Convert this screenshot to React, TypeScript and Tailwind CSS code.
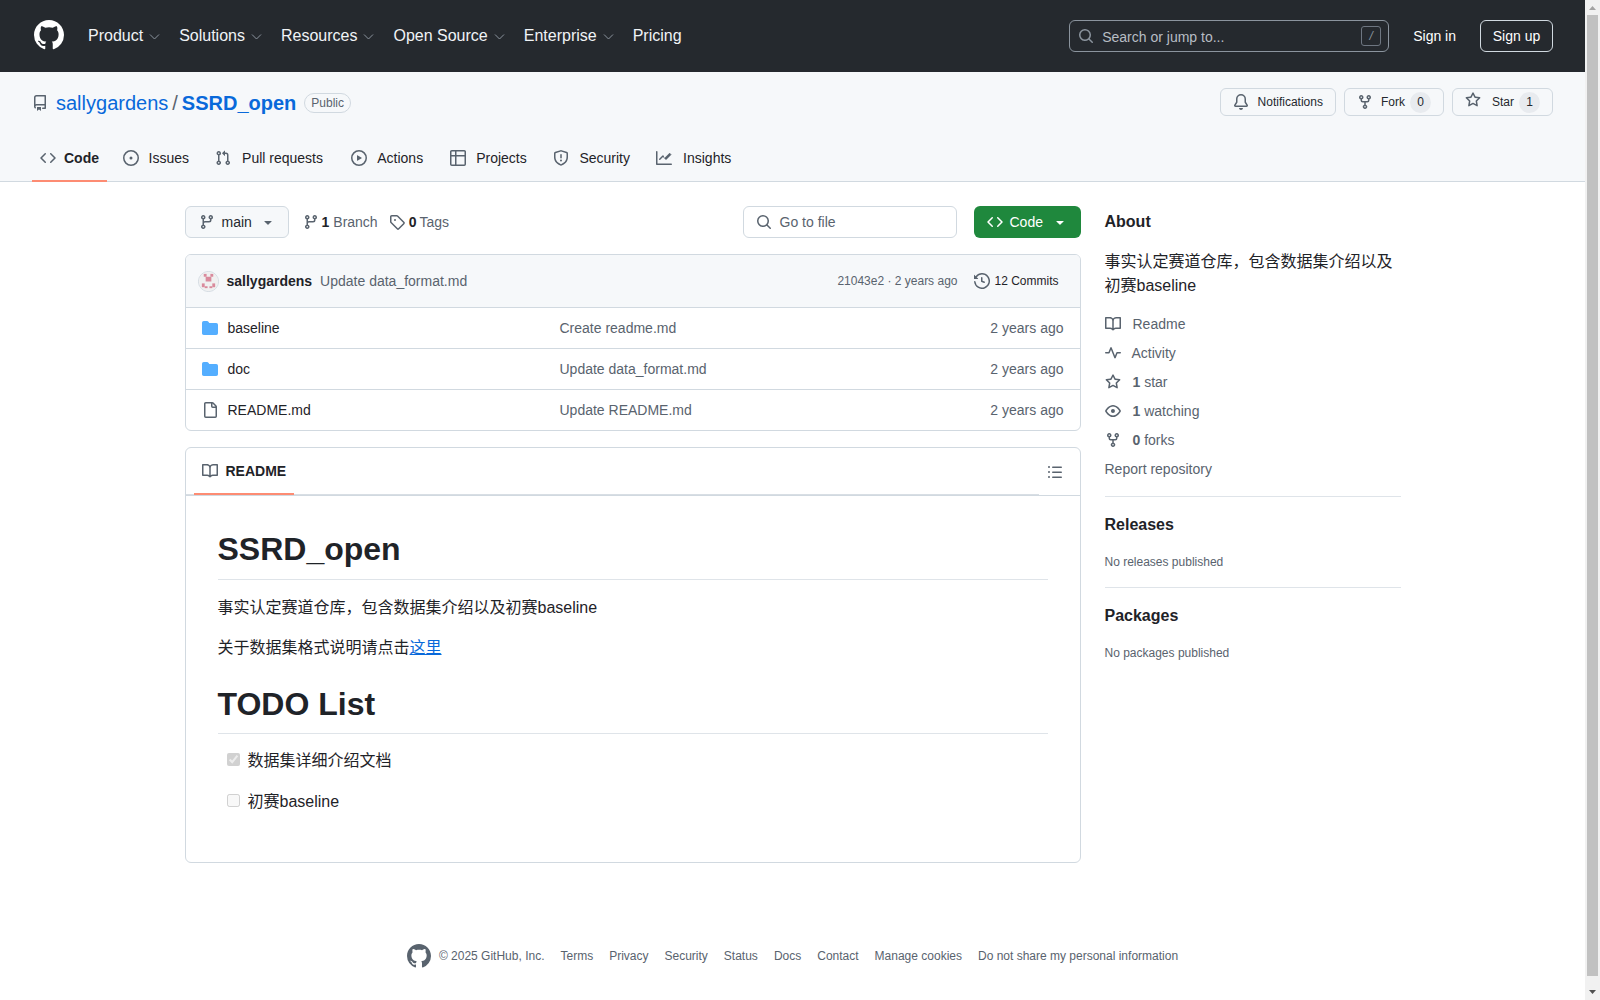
import type { ReactNode } from "react";

const icons: Record<string, string> = {
  mark: "M8 0c4.42 0 8 3.58 8 8a8.013 8.013 0 0 1-5.45 7.59c-.4.08-.55-.17-.55-.38 0-.27.01-1.13.01-2.2 0-.75-.25-1.23-.54-1.48 1.78-.2 3.65-.88 3.65-3.95 0-.88-.31-1.59-.82-2.15.08-.2.36-1.02-.08-2.12 0 0-.67-.22-2.2.82-.64-.18-1.32-.27-2-.27-.68 0-1.36.09-2 .27-1.53-1.03-2.2-.82-2.2-.82-.44 1.1-.16 1.92-.08 2.12-.51.56-.82 1.28-.82 2.15 0 3.06 1.86 3.75 3.64 3.95-.23.2-.44.55-.51 1.07-.46.21-1.61.55-2.33-.66-.15-.24-.6-.83-1.23-.82-.67.01-.27.38.01.53.34.19.73.9.82 1.13.16.45.68 1.31 2.69.94 0 .67.01 1.3.01 1.49 0 .21-.15.45-.55.38A7.995 7.995 0 0 1 0 8c0-4.42 3.58-8 8-8Z",
  repo: "M2 2.5A2.5 2.5 0 0 1 4.5 0h8.75a.75.75 0 0 1 .75.75v12.5a.75.75 0 0 1-.75.75h-2.5a.75.75 0 0 1 0-1.5h1.75v-2h-8a1 1 0 0 0-.714 1.7.75.75 0 1 1-1.072 1.05A2.495 2.495 0 0 1 2 11.5Zm10.5-1h-8a1 1 0 0 0-1 1v6.708A2.486 2.486 0 0 1 4.5 9h8ZM5 12.25a.25.25 0 0 1 .25-.25h3.5a.25.25 0 0 1 .25.25v3.25a.25.25 0 0 1-.4.2l-1.45-1.087a.249.249 0 0 0-.3 0L5.4 15.7a.25.25 0 0 1-.4-.2Z",
  code: "m11.28 3.22 4.25 4.25a.75.75 0 0 1 0 1.06l-4.25 4.25a.749.749 0 0 1-1.275-.326.749.749 0 0 1 .215-.734L13.94 8l-3.72-3.72a.749.749 0 0 1 .326-1.275.749.749 0 0 1 .734.215Zm-6.56 0a.751.751 0 0 1 1.042.018.751.751 0 0 1 .018 1.042L2.06 8l3.72 3.72a.749.749 0 0 1-.326 1.275.749.749 0 0 1-.734-.215L.47 8.53a.75.75 0 0 1 0-1.06Z",
  issue: "M8 9.5a1.5 1.5 0 1 0 0-3 1.5 1.5 0 0 0 0 3ZM8 0a8 8 0 1 1 0 16A8 8 0 0 1 8 0ZM1.5 8a6.5 6.5 0 1 0 13 0 6.5 6.5 0 0 0-13 0Z",
  pull: "M1.5 3.25a2.25 2.25 0 1 1 3 2.122v5.256a2.251 2.251 0 1 1-1.5 0V5.372A2.25 2.25 0 0 1 1.5 3.25Zm5.677-.177L9.573.677A.25.25 0 0 1 10 .854V2.5h1A2.5 2.5 0 0 1 13.5 5v5.628a2.251 2.251 0 1 1-1.5 0V5a1 1 0 0 0-1-1h-1v1.646a.25.25 0 0 1-.427.177L7.177 3.427a.25.25 0 0 1 0-.354ZM3.75 2.5a.75.75 0 1 0 0 1.5.75.75 0 0 0 0-1.5Zm0 9.5a.75.75 0 1 0 0 1.5.75.75 0 0 0 0-1.5Zm8.25.75a.75.75 0 1 0 1.5 0 .75.75 0 0 0-1.5 0Z",
  play: "M8 0a8 8 0 1 1 0 16A8 8 0 0 1 8 0ZM1.5 8a6.5 6.5 0 1 0 13 0 6.5 6.5 0 0 0-13 0Zm4.879-2.773 4.264 2.559a.25.25 0 0 1 0 .428l-4.264 2.559A.25.25 0 0 1 6 10.559V5.442a.25.25 0 0 1 .379-.215Z",
  table: "M0 1.75C0 .784.784 0 1.75 0h12.5C15.216 0 16 .784 16 1.75v12.5A1.75 1.75 0 0 1 14.25 16H1.75A1.75 1.75 0 0 1 0 14.25ZM6.5 6.5v8h7.75a.25.25 0 0 0 .25-.25V6.5Zm8-1.5V1.75a.25.25 0 0 0-.25-.25H6.5V5Zm-13 1.5v7.75c0 .138.112.25.25.25H5v-8ZM5 5V1.5H1.75a.25.25 0 0 0-.25.25V5Z",
  shield: "M7.467.133a1.748 1.748 0 0 1 1.066 0l5.25 1.68A1.75 1.75 0 0 1 15 3.48V7c0 1.566-.32 3.182-1.303 4.682-.983 1.498-2.585 2.813-5.032 3.855a1.697 1.697 0 0 1-1.33 0c-2.447-1.042-4.049-2.357-5.032-3.855C1.32 10.182 1 8.566 1 7V3.48a1.75 1.75 0 0 1 1.217-1.667Zm.61 1.429a.25.25 0 0 0-.153 0l-5.25 1.68a.25.25 0 0 0-.174.238V7c0 1.358.275 2.666 1.057 3.86.784 1.194 2.121 2.34 4.366 3.297a.196.196 0 0 0 .154 0c2.245-.956 3.582-2.104 4.366-3.298C13.225 9.666 13.5 8.36 13.5 7V3.48a.251.251 0 0 0-.174-.237l-5.25-1.68ZM8.75 4.75v3a.75.75 0 0 1-1.5 0v-3a.75.75 0 0 1 1.5 0ZM9 10.5a1 1 0 1 1-2 0 1 1 0 0 1 2 0Z",
  graph: "M1.5 1.75V13.5h13.75a.75.75 0 0 1 0 1.5H.75a.75.75 0 0 1-.75-.75V1.75a.75.75 0 0 1 1.5 0Zm14.28 2.53-5.25 5.25a.75.75 0 0 1-1.06 0L7 7.06 4.28 9.78a.751.751 0 0 1-1.042-.018.751.751 0 0 1-.018-1.042l3.25-3.25a.75.75 0 0 1 1.06 0L8.5 7.94l4.72-4.72a.751.751 0 0 1 1.042.018.751.751 0 0 1 .018 1.042Z",
  bell: "M8 16a2 2 0 0 0 1.985-1.75c.017-.137-.097-.25-.235-.25h-3.5c-.138 0-.252.113-.235.25A2 2 0 0 0 8 16ZM3 5a5 5 0 0 1 10 0v2.947c0 .05.015.098.042.139l1.703 2.555A1.519 1.519 0 0 1 13.482 13H2.518a1.516 1.516 0 0 1-1.263-2.36l1.703-2.554A.255.255 0 0 0 3 7.947Zm5-3.5A3.5 3.5 0 0 0 4.5 5v2.947c0 .346-.102.683-.294.97l-1.703 2.556a.017.017 0 0 0-.003.01l.001.006c0 .002.002.004.004.006l.006.004.007.001h10.964l.007-.001.006-.004.004-.006.001-.007a.017.017 0 0 0-.003-.01l-1.703-2.554a1.745 1.745 0 0 1-.294-.97V5A3.5 3.5 0 0 0 8 1.5Z",
  fork: "M5 5.372v.878c0 .414.336.75.75.75h4.5a.75.75 0 0 0 .75-.75v-.878a2.25 2.25 0 1 1 1.5 0v.878a2.25 2.25 0 0 1-2.25 2.25h-1.5v2.128a2.251 2.251 0 1 1-1.5 0V8.5h-1.5A2.25 2.25 0 0 1 3.5 6.25v-.878a2.25 2.25 0 1 1 1.5 0ZM5 3.25a.75.75 0 1 0-1.5 0 .75.75 0 0 0 1.5 0Zm6.75.75a.75.75 0 1 0 0-1.5.75.75 0 0 0 0 1.5Zm-3 8.75a.75.75 0 1 0-1.5 0 .75.75 0 0 0 1.5 0Z",
  star: "M8 .25a.75.75 0 0 1 .673.418l1.882 3.815 4.21.612a.75.75 0 0 1 .416 1.279l-3.046 2.97.719 4.192a.751.751 0 0 1-1.088.791L8 12.347l-3.766 1.98a.75.75 0 0 1-1.088-.79l.72-4.194L.818 6.374a.75.75 0 0 1 .416-1.28l4.21-.611L7.327.668A.75.75 0 0 1 8 .25Zm0 2.445L6.615 5.5a.75.75 0 0 1-.564.41l-3.097.45 2.24 2.184a.75.75 0 0 1 .216.664l-.528 3.084 2.769-1.456a.75.75 0 0 1 .698 0l2.77 1.456-.53-3.084a.75.75 0 0 1 .216-.664l2.24-2.183-3.096-.45a.75.75 0 0 1-.564-.41L8 2.694Z",
  branch: "M9.5 3.25a2.25 2.25 0 1 1 3 2.122V6A2.5 2.5 0 0 1 10 8.5H6a1 1 0 0 0-1 1v1.128a2.251 2.251 0 1 1-1.5 0V5.372a2.25 2.25 0 1 1 1.5 0v1.836A2.493 2.493 0 0 1 6 7h4a1 1 0 0 0 1-1v-.628A2.25 2.25 0 0 1 9.5 3.25Zm-6 0a.75.75 0 1 0 1.5 0 .75.75 0 0 0-1.5 0Zm8.25-.75a.75.75 0 1 0 0 1.5.75.75 0 0 0 0-1.5ZM4.25 12a.75.75 0 1 0 0 1.5.75.75 0 0 0 0-1.5Z",
  tag: "M1 7.775V2.75C1 1.784 1.784 1 2.75 1h5.025c.464 0 .91.184 1.238.513l6.25 6.25a1.75 1.75 0 0 1 0 2.474l-5.026 5.026a1.75 1.75 0 0 1-2.474 0l-6.25-6.25A1.752 1.752 0 0 1 1 7.775Zm1.5 0c0 .066.026.13.073.177l6.25 6.25a.25.25 0 0 0 .354 0l5.025-5.025a.25.25 0 0 0 0-.354l-6.25-6.25a.25.25 0 0 0-.177-.073H2.75a.25.25 0 0 0-.25.25ZM6 5a1 1 0 1 1 0 2 1 1 0 0 1 0-2Z",
  search: "M10.68 11.74a6 6 0 0 1-7.922-8.982 6 6 0 0 1 8.982 7.922l3.04 3.04a.749.749 0 0 1-.326 1.275.749.749 0 0 1-.734-.215ZM11.5 7a4.499 4.499 0 1 0-8.997 0A4.499 4.499 0 0 0 11.5 7Z",
  history: "m.427 1.927 1.215 1.215a8.002 8.002 0 1 1-1.6 5.685.75.75 0 1 1 1.493-.154 6.5 6.5 0 1 0 1.18-4.458l1.358 1.358A.25.25 0 0 1 3.896 6H.25A.25.25 0 0 1 0 5.75V2.104a.25.25 0 0 1 .427-.177ZM7.75 4a.75.75 0 0 1 .75.75v2.992l2.028.812a.75.75 0 0 1-.557 1.392l-2.5-1A.751.751 0 0 1 7 8.25v-3.5A.75.75 0 0 1 7.75 4Z",
  folder: "M1.75 1A1.75 1.75 0 0 0 0 2.75v10.5C0 14.216.784 15 1.75 15h12.5A1.75 1.75 0 0 0 16 13.25v-8.5A1.75 1.75 0 0 0 14.25 3H7.5a.25.25 0 0 1-.2-.1l-.9-1.2C6.07 1.26 5.55 1 5 1H1.75Z",
  file: "M2 1.75C2 .784 2.784 0 3.75 0h6.586c.464 0 .909.184 1.237.513l2.914 2.914c.329.328.513.773.513 1.237v9.586A1.75 1.75 0 0 1 13.25 16h-9.5A1.75 1.75 0 0 1 2 14.25Zm1.75-.25a.25.25 0 0 0-.25.25v12.5c0 .138.112.25.25.25h9.5a.25.25 0 0 0 .25-.25V6h-2.75A1.75 1.75 0 0 1 9 4.25V1.5Zm6.75.062V4.25c0 .138.112.25.25.25h2.688l-.011-.013-2.914-2.914-.013-.011Z",
  book: "M0 1.75A.75.75 0 0 1 .75 1h4.253c1.227 0 2.317.59 3 1.501A3.743 3.743 0 0 1 11.006 1h4.245a.75.75 0 0 1 .75.75v10.5a.75.75 0 0 1-.75.75h-4.507a2.25 2.25 0 0 0-1.591.659l-.622.621a.75.75 0 0 1-1.06 0l-.622-.621A2.25 2.25 0 0 0 5.258 13H.75a.75.75 0 0 1-.75-.75Zm7.251 10.324.004-5.073-.002-2.253A2.25 2.25 0 0 0 5.003 2.5H1.5v9h3.757a3.75 3.75 0 0 1 1.994.574ZM8.755 4.75l-.004 7.322a3.752 3.752 0 0 1 1.992-.572H14.5v-9h-3.495a2.25 2.25 0 0 0-2.25 2.25Z",
  pulse: "M6 2c.306 0 .582.187.696.471L10 10.731l1.304-3.26A.751.751 0 0 1 12 7h3.25a.75.75 0 0 1 0 1.5h-2.742l-1.812 4.528a.751.751 0 0 1-1.392 0L6 4.77 4.696 8.03A.75.75 0 0 1 4 8.5H.75a.75.75 0 0 1 0-1.5h2.742l1.812-4.529A.751.751 0 0 1 6 2Z",
  eye: "M8 2c1.981 0 3.671.992 4.933 2.078 1.27 1.091 2.187 2.345 2.637 3.023a1.62 1.62 0 0 1 0 1.798c-.45.678-1.367 1.932-2.637 3.023C11.67 13.008 9.981 14 8 14c-1.981 0-3.671-.992-4.933-2.078C1.797 10.83.88 9.576.43 8.898a1.62 1.62 0 0 1 0-1.798c.45-.677 1.367-1.931 2.637-3.022C4.33 2.992 6.019 2 8 2ZM1.679 7.932a.12.12 0 0 0 0 .136c.411.622 1.241 1.75 2.366 2.717C5.176 11.758 6.527 12.5 8 12.5c1.473 0 2.825-.742 3.955-1.715 1.124-.967 1.954-2.096 2.366-2.717a.12.12 0 0 0 0-.136c-.412-.621-1.242-1.75-2.366-2.717C10.824 4.242 9.473 3.5 8 3.5c-1.473 0-2.825.742-3.955 1.715-1.124.967-1.954 2.096-2.366 2.717ZM8 10a2 2 0 1 1-.001-3.999A2 2 0 0 1 8 10Z",
  list: "M5.75 2.5h8.5a.75.75 0 0 1 0 1.5h-8.5a.75.75 0 0 1 0-1.5Zm0 5h8.5a.75.75 0 0 1 0 1.5h-8.5a.75.75 0 0 1 0-1.5Zm0 5h8.5a.75.75 0 0 1 0 1.5h-8.5a.75.75 0 0 1 0-1.5ZM2 14a1 1 0 1 1 0-2 1 1 0 0 1 0 2Zm1-6a1 1 0 1 1-2 0 1 1 0 0 1 2 0ZM2 4a1 1 0 1 1 0-2 1 1 0 0 1 0 2Z",
  triangle: "m4.427 7.427 3.396 3.396a.25.25 0 0 0 .354 0l3.396-3.396A.25.25 0 0 0 11.396 7H4.604a.25.25 0 0 0-.177.427Z",
};

function Icon({ name, size = 16, className = "" }: { name: string; size?: number; className?: string }) {
  return (
    <svg viewBox="0 0 16 16" width={size} height={size} fill="currentColor" className={`shrink-0 ${className}`}>
      <path d={icons[name]} />
    </svg>
  );
}

function Avatar() {
  return (
    <svg viewBox="0 0 20 20" width={21} height={21} className="shrink-0 rounded-full border border-[#d1d9e0]">
      <rect width="20" height="20" fill="#f0f0f0" />
      <g fill="#d98a9c">
        <rect x="5" y="2" width="3" height="3" />
        <rect x="12" y="2" width="3" height="3" />
        <rect x="7" y="5" width="6" height="5" />
        <rect x="3" y="12" width="3" height="4" />
        <rect x="14" y="12" width="3" height="4" />
        <rect x="6" y="15" width="3" height="2" />
        <rect x="11" y="15" width="3" height="2" />
      </g>
    </svg>
  );
}

const navItems = ["Product", "Solutions", "Resources", "Open Source", "Enterprise"];

function TopBar() {
  return (
    <header className="h-[72px] bg-[#25292e] flex items-center px-8 text-white">
      <Icon name="mark" size={30} className="ml-0.5 -mt-0.5" />
      <nav className="flex items-center gap-[18px] ml-6 text-base">
        {navItems.map((item) => (
          <div key={item} className="flex items-center gap-[5px] text-[#f0f3f6]">
            <span>{item}</span>
            <svg viewBox="0 0 13 13" width={13} height={13} fill="none" stroke="currentColor" className="text-[#8b949e] mt-px">
              <path d="M2 4.5 6.5 9 11 4.5" />
            </svg>
          </div>
        ))}
        <span className="text-[#f0f3f6]">Pricing</span>
      </nav>
      <div className="ml-auto flex items-center">
        <div className="w-[320px] h-8 rounded-md border border-[#8b949e] flex items-center pl-2 pr-[7px]">
          <Icon name="search" className="text-[#8b949e]" />
          <span className="ml-2 pt-px text-sm text-[#b7bdc4]">Search or jump to...</span>
          <span className="ml-auto w-5 h-5 rounded-[3px] border border-[#6e7681] text-[#8b949e] text-xs italic flex items-center justify-center">/</span>
        </div>
        <span className="ml-6 text-sm">Sign in</span>
        <span className="ml-6 w-[73px] h-8 rounded-md border border-[#d1d9e0] text-sm flex items-center justify-center">Sign up</span>
      </div>
    </header>
  );
}

function HeadButton({ icon, label, count }: { icon: string; label: string; count?: string }) {
  return (
    <div className="h-7 px-3 rounded-md border border-[#d1d9e0] bg-[#f6f8fa] flex items-center text-xs text-[#25292e]">
      <Icon name={icon} className={`text-[#59636e] ${icon === "star" ? "-mt-1 mr-[3px]" : ""}`} />
      <span className={icon === "bell" ? "ml-[9px]" : "ml-2"}>{label}</span>
      {count && <span className="ml-[5px] w-[21px] h-[21px] rounded-full bg-[#e8ebef] flex items-center justify-center text-[#25292e]">{count}</span>}
    </div>
  );
}

const tabs = [
  { icon: "code", label: "Code", active: true },
  { icon: "issue", label: "Issues" },
  { icon: "pull", label: "Pull requests" },
  { icon: "play", label: "Actions" },
  { icon: "table", label: "Projects" },
  { icon: "shield", label: "Security" },
  { icon: "graph", label: "Insights" },
];

function RepoHead() {
  return (
    <div className="bg-[#f6f8fa] border-b border-[#d1d9e0] px-8 pt-4">
      <div className="flex items-center h-7">
        <div className="flex items-center pt-0.5">
          <Icon name="repo" className="text-[#59636e]" />
          <a className="ml-2 text-xl text-[#0969da]">sallygardens</a>
          <span className="mx-1 text-xl text-[#59636e]">/</span>
          <a className="text-xl font-bold text-[#0969da]">SSRD_open</a>
          <span className="ml-2 h-5 px-[6px] rounded-full border border-[#d1d9e0] text-xs text-[#59636e] flex items-center">Public</span>
        </div>
        <div className="ml-auto flex gap-2">
          <HeadButton icon="bell" label="Notifications" />
          <HeadButton icon="fork" label="Fork" count="0" />
          <HeadButton icon="star" label="Star" count="1" />
        </div>
      </div>
      <div className="flex gap-2 mt-[18px] h-12 -mb-px">
        {tabs.map((t) => (
          <div key={t.label} className="relative flex items-center gap-2 px-2 text-sm text-[#1f2328]">
            <Icon name={t.icon} className="text-[#59636e]" />
            {/* the bold copy holds the width so the tab doesn't jump when active */}
            <span className={`inline-grid text-center ${t.active ? "font-bold" : ""}`}>
              <span className="invisible h-0 font-bold">{t.label}</span>
              {t.label}
            </span>
            {t.active && <span className="absolute left-0 right-0 bottom-0 h-0.5 bg-[#fd8c73]" />}
          </div>
        ))}
      </div>
    </div>
  );
}

function FileRow({ icon, name, message }: { icon: string; name: string; message: string }) {
  return (
    <div className="h-[41px] border-t border-[#d1d9e0] flex items-center text-sm">
      <div className="w-[374px] pl-4 flex items-center">
        <Icon name={icon} className={icon === "folder" ? "text-[#54aeff]" : "text-[#59636e]"} />
        <span className="ml-[10px] text-[#1f2328]">{name}</span>
      </div>
      <span className="text-[#59636e]">{message}</span>
      <span className="ml-auto pr-4 text-[#59636e]">2 years ago</span>
    </div>
  );
}

function Stat({ icon, children }: { icon: string; children: ReactNode }) {
  return (
    <div className="h-[29px] flex items-center text-sm text-[#59636e]">
      <Icon name={icon} className={icon === "pulse" ? "mr-[11px]" : "mr-[12px]"} />
      <span>{children}</span>
    </div>
  );
}

function RepoFiles() {
  return (
    <>
      <div className="flex items-center h-8">
        <div className="w-[104px] h-8 rounded-md border border-[#d1d9e0] bg-[#f6f8fa] flex items-center pl-[13px] text-sm text-[#25292e]">
          <Icon name="branch" className="text-[#59636e]" />
          <span className="ml-[7px]">main</span>
          <Icon name="triangle" className="ml-2 text-[#59636e]" />
        </div>
        <div className="ml-3.5 flex items-center text-sm text-[#59636e]">
          <Icon name="branch" />
          <span className="ml-[3px] font-bold text-[#1f2328]">1</span>
          <span className="ml-1">Branch</span>
          <Icon name="tag" className="ml-[11px]" />
          <span className="ml-1 font-bold text-[#1f2328]">0</span>
          <span className="ml-[3px]">Tags</span>
        </div>
        <div className="ml-auto w-[214px] h-8 rounded-md border border-[#d1d9e0] flex items-center pl-3 text-sm text-[#59636e]">
          <Icon name="search" />
          <span className="ml-2">Go to file</span>
        </div>
        <div className="ml-[17px] w-[107px] h-8 rounded-md bg-[#1f883d] text-white text-sm flex items-center pl-[13px]">
          <Icon name="code" />
          <span className="ml-[7px]">Code</span>
          <Icon name="triangle" className="ml-[9px]" />
        </div>
      </div>

      <div className="mt-4 rounded-md border border-[#d1d9e0] overflow-hidden">
        <div className="h-[52px] bg-[#f6f8fa] flex items-center pl-3 pr-[21px] text-sm">
          <Avatar />
          <span className="ml-2 font-bold text-[#1f2328]">sallygardens</span>
          <span className="ml-2 text-[#59636e]">Update data_format.md</span>
          <span className="ml-auto text-xs text-[#59636e]">21043e2 · 2 years ago</span>
          <Icon name="history" className="ml-[17px] text-[#59636e]" />
          <span className="ml-1 text-xs text-[#1f2328]">12 Commits</span>
        </div>
        <FileRow icon="folder" name="baseline" message="Create readme.md" />
        <FileRow icon="folder" name="doc" message="Update data_format.md" />
        <FileRow icon="file" name="README.md" message="Update README.md" />
      </div>
    </>
  );
}

function Readme() {
  return (
    <div className="mt-4 rounded-md border border-[#d1d9e0]">
      <div className="h-12 border-b border-[#d1d9e0] flex">
        <div className="flex-1 pl-2 border-b border-[#d8dee4]">
          <div className="relative h-[46px] w-[100px] flex items-center pl-2 text-sm font-bold text-[#1f2328]">
            <Icon name="book" className="text-[#59636e]" />
            <span className="ml-2">README</span>
            <span className="absolute left-0 right-0 -bottom-px h-0.5 bg-[#fd8c73]" />
          </div>
        </div>
        <div className="w-[41px] flex items-center">
          <Icon name="list" className="ml-2 text-[#59636e]" />
        </div>
      </div>
      <div className="p-8 pt-[33px] text-base text-[#1f2328]">
        <h1 className="text-[32px] leading-10 font-bold pb-[9.6px] border-b border-[#d1d9e0b3]">SSRD_open</h1>
        <p className="mt-4 leading-6">事实认定赛道仓库，包含数据集介绍以及初赛baseline</p>
        <p className="mt-4 leading-6">关于数据集格式说明请点击<a className="text-[#0969da] underline">这里</a></p>
        <h1 className="mt-6 text-[32px] leading-10 font-bold pb-[9.6px] border-b border-[#d1d9e0b3]">TODO List</h1>
        <ul className="mt-[15px] pl-[9px]">
          <li className="flex items-center leading-6 h-6">
            <input type="checkbox" checked disabled readOnly className="w-[13px] h-[13px] mr-2 -mt-[3px]" />
            数据集详细介绍文档
          </li>
          <li className="flex items-center leading-6 h-6 mt-[17px]">
            <input type="checkbox" disabled className="w-[13px] h-[13px] mr-2 -mt-[3px]" />
            初赛baseline
          </li>
        </ul>
        <div className="h-4" />
      </div>
    </div>
  );
}

function Sidebar() {
  return (
    <aside className="w-[296px] shrink-0">
      <h2 className="text-base font-bold leading-8 text-[#1f2328]">About</h2>
      <p className="mt-[12px] text-base leading-6 text-[#1f2328]">事实认定赛道仓库，包含数据集介绍以及初赛baseline</p>
      <div className="mt-[11px]">
        <Stat icon="book">Readme</Stat>
        <Stat icon="pulse">Activity</Stat>
        <Stat icon="star"><b>1</b> star</Stat>
        <Stat icon="eye"><b>1</b> watching</Stat>
        <Stat icon="fork"><b>0</b> forks</Stat>
        <div className="h-[29px] flex items-center text-sm text-[#59636e]">Report repository</div>
      </div>
      <div className="mt-[13px] pt-4 border-t border-[#d1d9e0b3]">
        <h2 className="text-base font-bold leading-6 text-[#1f2328]">Releases</h2>
        <p className="mt-4 text-xs leading-[18px] text-[#59636e]">No releases published</p>
      </div>
      <div className="mt-4 pt-4 border-t border-[#d1d9e0b3]">
        <h2 className="text-base font-bold leading-6 text-[#1f2328]">Packages</h2>
        <p className="mt-4 text-xs leading-[18px] text-[#59636e]">No packages published</p>
      </div>
    </aside>
  );
}

const footerLinks = ["Terms", "Privacy", "Security", "Status", "Docs", "Contact", "Manage cookies", "Do not share my personal information"];

function Footer() {
  return (
    <footer className="mt-[81px] flex justify-center text-xs text-[#59636e]">
      <div className="flex items-center h-6">
        <Icon name="mark" size={24} />
        <span className="ml-2">© 2025 GitHub, Inc.</span>
        <div className="ml-4 flex gap-4">
          {footerLinks.map((l) => (
            <span key={l}>{l}</span>
          ))}
        </div>
      </div>
    </footer>
  );
}

// the page is a bit taller than the window in the picture, so the scrollbar shows
function Scrollbar() {
  return (
    <div className="w-[15px] shrink-0 bg-[#f1f1f1] flex flex-col items-center">
      <svg viewBox="0 0 7 4" width={7} height={4} fill="#a3a3a3" className="mt-[6px] mb-[5px]">
        <path d="M3.5 0 7 4H0Z" />
      </svg>
      <div className="w-[11px] h-[961px] bg-[#c1c1c1]" />
      <svg viewBox="0 0 7 4" width={7} height={4} fill="#505050" className="mt-[14px]">
        <path d="M0 0h7L3.5 4Z" />
      </svg>
    </div>
  );
}

export default function App() {
  return (
    <div className="font-['Liberation_Sans','Noto_Sans_CJK_SC',sans-serif] bg-white flex h-[1000px] overflow-hidden">
      <div className="flex-1 min-w-0">
        <TopBar />
        <RepoHead />
        <div className="mx-auto w-[1280px] px-8 pt-6 flex gap-6">
          <main className="w-[896px] shrink-0">
            <RepoFiles />
            <Readme />
          </main>
          <Sidebar />
        </div>
        <Footer />
      </div>
      <Scrollbar />
    </div>
  );
}
